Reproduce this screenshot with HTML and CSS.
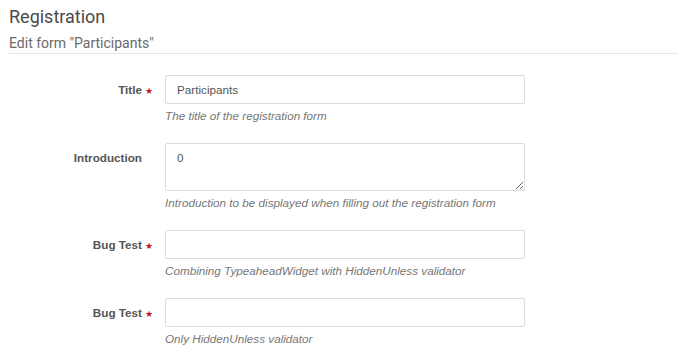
FILE: index.html
```html
<!DOCTYPE html>
<html lang="en">
<head>
  <meta charset="UTF-8">
  <title>Registration</title>
  <link rel="stylesheet" href="styles.css">
</head>
<body>
  <div class="page">
    <div class="page-header">
      <h1>Registration</h1>
      <h2>Edit form "Participants"</h2>
    </div>

    <form class="form">
      <div class="row">
        <label for="title">Title <span class="req">&#9733;</span></label>
        <div class="field">
          <input type="text" id="title" value="Participants">
          <div class="help">The title of the registration form</div>
        </div>
      </div>

      <div class="row">
        <label for="intro">Introduction</label>
        <div class="field">
          <textarea id="intro">0</textarea>
          <div class="help">Introduction to be displayed when filling out the registration form</div>
        </div>
      </div>

      <div class="row">
        <label for="bug1">Bug Test <span class="req">&#9733;</span></label>
        <div class="field">
          <input type="text" id="bug1">
          <div class="help">Combining TypeaheadWidget with HiddenUnless validator</div>
        </div>
      </div>

      <div class="row">
        <label for="bug2">Bug Test <span class="req">&#9733;</span></label>
        <div class="field">
          <input type="text" id="bug2">
          <div class="help">Only HiddenUnless validator</div>
        </div>
      </div>
    </form>
  </div>
</body>
</html>
```

FILE: styles.css
```css
body {margin: 0; background: #fff; font-family: "Liberation Sans", Arial, sans-serif; font-size: 11.7px; color: #555;}
.page {padding: 7px 0 0 9px;}
.page-header {border-bottom: 1px solid #e6e6e6; padding-bottom: 1px;}
.page-header h1 {margin: 0; font-family: Roboto, sans-serif; font-weight: 400; font-size: 18px; line-height: 20px; color: #4a4a4a;}
.page-header h2 {margin: 7px 0 0; font-family: Roboto, sans-serif; font-weight: 400; font-size: 14px; line-height: 18px; color: #6a6a6a;}
.form {padding-top: 21px;}
.row {display: grid; grid-template-columns: 144px 360px; column-gap: 12px; margin-bottom: 19px;}
.row label {position: relative; text-align: right; font-weight: bold; color: #555; padding: 7px 11px 0 0; line-height: 15px;}
.req {position: absolute; right: 0; top: 9px; color: #c4161c; font-size: 9px; font-weight: normal;}
.field input, .field textarea {display: block; width: 360px; box-sizing: border-box; border: 1px solid #dcdcdc; border-radius: 2px; font-family: "Liberation Sans", Arial, sans-serif; font-size: 11.7px; color: #555; padding: 0 11px; margin: 0;}
.field input {height: 29px;}
.field textarea {height: 48px; padding-top: 7px; resize: vertical;}
.help {margin-top: 3px; font-style: italic; color: #777; line-height: 17px;}
```
